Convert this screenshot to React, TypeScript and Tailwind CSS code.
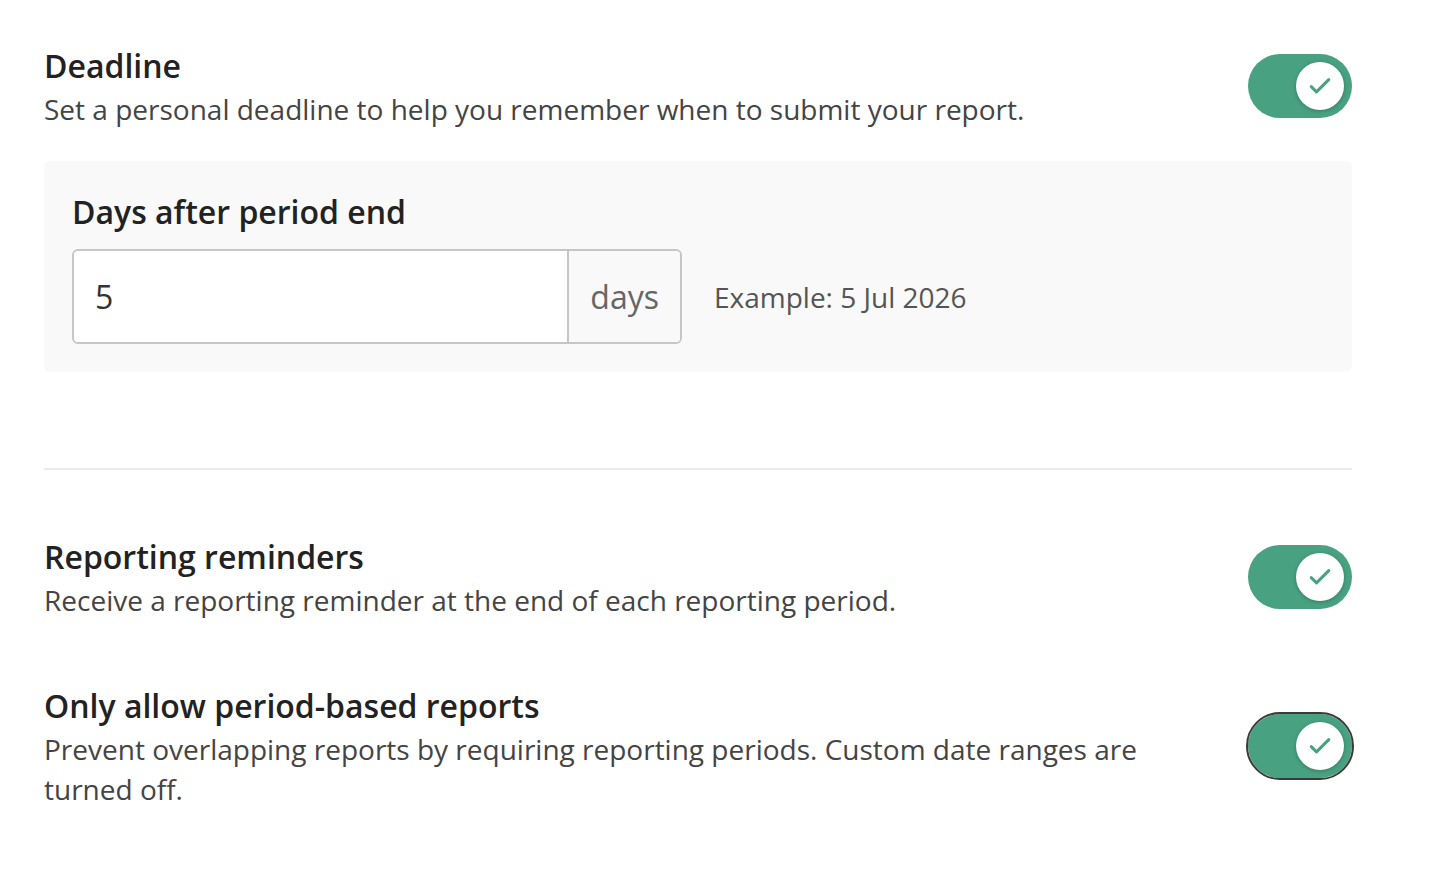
function Toggle({ focused = false }: { focused?: boolean }) {
  return (
    <button
      className={
        "relative flex items-center justify-end shrink-0 w-[104px] h-[64px] mb-[4px] rounded-full bg-[#48a282] pr-[8px] " +
        (focused ? "outline-2 outline-offset-0 outline-[#3a3a3a]" : "")
      }
    >
      <span className="flex items-center justify-center w-[48px] h-[48px] rounded-full bg-white shadow-[0_1px_4px_rgba(0,0,0,0.25)]">
        <svg width="28" height="28" viewBox="0 0 24 24" fill="none" stroke="#48a282" strokeWidth="2.6" strokeLinecap="round" strokeLinejoin="round">
          <path d="M4.5 12.5l4.5 4.5L19.5 6.5" />
        </svg>
      </span>
    </button>
  )
}

function SettingRow({ title, desc, focused }: { title: string; desc: string; focused?: boolean }) {
  return (
    <div className="flex items-center justify-between">
      <div className="max-w-[1120px]">
        <div className="text-[32px] leading-[40px] font-semibold text-[#222]">{title}</div>
        <div className="mt-[3px] text-[28px] leading-[40px] text-[#444]">{desc}</div>
      </div>
      <Toggle focused={focused} />
    </div>
  )
}

export default function App() {
  return (
    <div className="min-h-[890px] bg-white pl-[44px] pr-[80px] pt-[46px] font-['Open_Sans',sans-serif]">
      <SettingRow
        title="Deadline"
        desc="Set a personal deadline to help you remember when to submit your report."
      />

      <div className="mt-[32px] bg-[#f9f9f9] rounded-[6px] pl-[28px] pr-[29px] pt-[31px] pb-[28px]">
        <div className="text-[32px] leading-[40px] font-semibold text-[#222]">Days after period end</div>
        <div className="mt-[17px] flex items-center">
          <div className="flex w-[610px] h-[95px] border-2 border-[#c6c6c6] rounded-[6px] overflow-hidden">
            <div className="flex-1 flex items-center bg-white pl-[21px] text-[32px] text-[#333]">5</div>
            <div className="flex items-center border-l-2 border-[#c6c6c6] px-[21px] text-[32px] text-[#666] bg-[#f9f9f9]">
              days
            </div>
          </div>
          <div className="ml-[32px] text-[28px] text-[#555]">Example: 5 Jul 2026</div>
        </div>
      </div>

      <div className="mt-[96px] h-[2px] bg-[#ebebeb]" />

      <div className="mt-[67px]">
        <SettingRow
          title="Reporting reminders"
          desc="Receive a reporting reminder at the end of each reporting period."
        />
      </div>

      <div className="mt-[66px]">
        <SettingRow
          title="Only allow period-based reports"
          desc="Prevent overlapping reports by requiring reporting periods. Custom date ranges are turned off."
          focused
        />
      </div>
    </div>
  )
}
